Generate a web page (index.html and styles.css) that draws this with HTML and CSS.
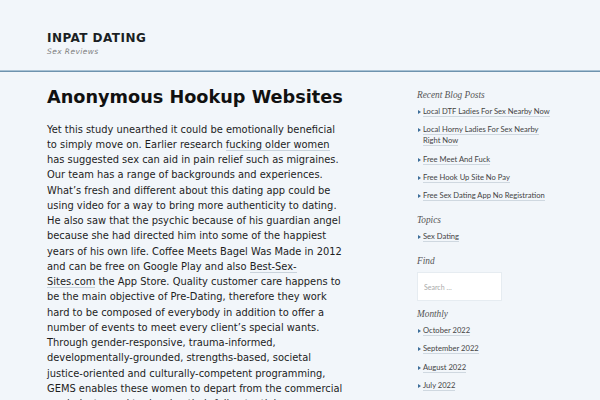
FILE: index.html
```html
<!DOCTYPE html>
<html>
<head>
<meta charset="utf-8">
<link rel="stylesheet" href="styles.css">
</head>
<body>
<header class="site-header">
  <div class="site-title">INPAT DATING</div>
  <div class="site-tagline">Sex Reviews</div>
</header>
<div class="layout">
  <main class="content">
    <h1 class="entry-title">Anonymous Hookup Websites</h1>
    <p class="entry-text">Yet this study unearthed it could be emotionally beneficial to simply move on. Earlier research <a href="#">fucking older women</a> has suggested sex can aid in pain relief such as migraines. Our team has a range of backgrounds and experiences. What’s fresh and different about this dating app could be using video for a way to bring more authenticity to dating. He also saw that the psychic because of his guardian angel because she had directed him into some of the happiest years of his own life. Coffee Meets Bagel Was Made in 2012 and can be free on Google Play and also <a href="#">Best-Sex-Sites.com</a> the App Store. Quality customer care happens to be the main objective of Pre-Dating, therefore they work hard to be composed of everybody in addition to offer a number of events to meet every client’s special wants. Through gender-responsive, trauma-informed, developmentally-grounded, strengths-based, societal justice-oriented and culturally-competent programming, GEMS enables these women to depart from the commercial sex industry and to develop their full potential.</p>
  </main>
  <aside class="sidebar">
    <section class="widget">
      <h2 class="widget-title">Recent Blog Posts</h2>
      <ul class="widget-list">
        <li><a href="#">Local DTF Ladies For Sex Nearby Now</a></li>
        <li><a href="#">Local Horny Ladies For Sex Nearby Right Now</a></li>
        <li><a href="#">Free Meet And Fuck</a></li>
        <li><a href="#">Free Hook Up Site No Pay</a></li>
        <li><a href="#">Free Sex Dating App No Registration</a></li>
      </ul>
    </section>
    <section class="widget">
      <h2 class="widget-title">Topics</h2>
      <ul class="widget-list">
        <li><a href="#">Sex Dating</a></li>
      </ul>
    </section>
    <section class="widget widget-search">
      <h2 class="widget-title">Find</h2>
      <input class="search-field" type="search" placeholder="Search …">
    </section>
    <section class="widget">
      <h2 class="widget-title">Monthly</h2>
      <ul class="widget-list">
        <li><a href="#">October 2022</a></li>
        <li><a href="#">September 2022</a></li>
        <li><a href="#">August 2022</a></li>
        <li><a href="#">July 2022</a></li>
        <li><a href="#">June 2022</a></li>
      </ul>
    </section>
  </aside>
</div>
</body>
</html>
```
FILE: styles.css
```css
html, body {
  margin: 0;
  padding: 0;
  background: #f2f6fa;
}
body {
  font-family: "DejaVu Sans", sans-serif;
  color: #1d1d1d;
  height: 400px;
  overflow: hidden;
}
.site-header {
  padding: 31px 0 0 47px;
  height: 40px;
  border-bottom: 1px solid #6e93ae;
  box-shadow: 0 -1px 0 #a9c2d4 inset;
}
.site-title {
  font-weight: bold;
  font-size: 12px;
  letter-spacing: 0.45px;
  line-height: 14px;
  color: #1b1f24;
}
.site-tagline {
  font-style: italic;
  font-size: 7.5px;
  letter-spacing: 0.4px;
  line-height: 9px;
  color: #808080;
  margin-top: 2px;
}
.layout {
  display: flex;
  padding-left: 47px;
  gap: 74px;
}
.content {
  width: 296px;
  flex: none;
}
.entry-title {
  font-size: 17.7px;
  font-weight: bold;
  margin: 13px 0 0;
  line-height: 24px;
  color: #111;
  white-space: nowrap;
}
.entry-text {
  font-size: 9.9px;
  line-height: 15.25px;
  margin: 12.5px 0 0;
  color: #1d1d1d;
}
.entry-text a {
  color: #1d1d1d;
  text-decoration: none;
  border-bottom: 1px solid #c9d3dc;
}
.sidebar {
  width: 138px;
  flex: none;
  padding-top: 17px;
}
.widget {
  margin-bottom: 13px;
}
.widget-search {
  margin-bottom: 7px;
}
.widget-title {
  font-family: "Liberation Serif", serif;
  font-style: italic;
  font-weight: normal;
  font-size: 9.3px;
  color: #555;
  margin: 0 0 5px;
  line-height: 12px;
}
.widget-list {
  list-style: none;
  margin: 0;
  padding: 0;
}
.widget-list li {
  font-family: "Lato", sans-serif;
  font-size: 7.6px;
  line-height: 11px;
  margin-bottom: 7.3px;
  padding-left: 6px;
  position: relative;
  color: #444;
}
.widget-list li::before {
  content: "";
  position: absolute;
  left: 1px;
  top: 4px;
  border-left: 3px solid #3d6d99;
  border-top: 2px solid transparent;
  border-bottom: 2px solid transparent;
}
.widget-list a {
  color: #444;
  text-decoration: none;
  border-bottom: 1px solid #cfd8e0;
}
.search-field {
  display: block;
  box-sizing: border-box;
  width: 85px;
  height: 29px;
  margin-top: 5px;
  border: 1px solid #e6ecf1;
  background: #fff;
  font-family: "Lato", sans-serif;
  font-size: 7px;
  padding: 0 6px;
  outline: none;
}
.search-field::placeholder {
  color: #aaa;
}
```
